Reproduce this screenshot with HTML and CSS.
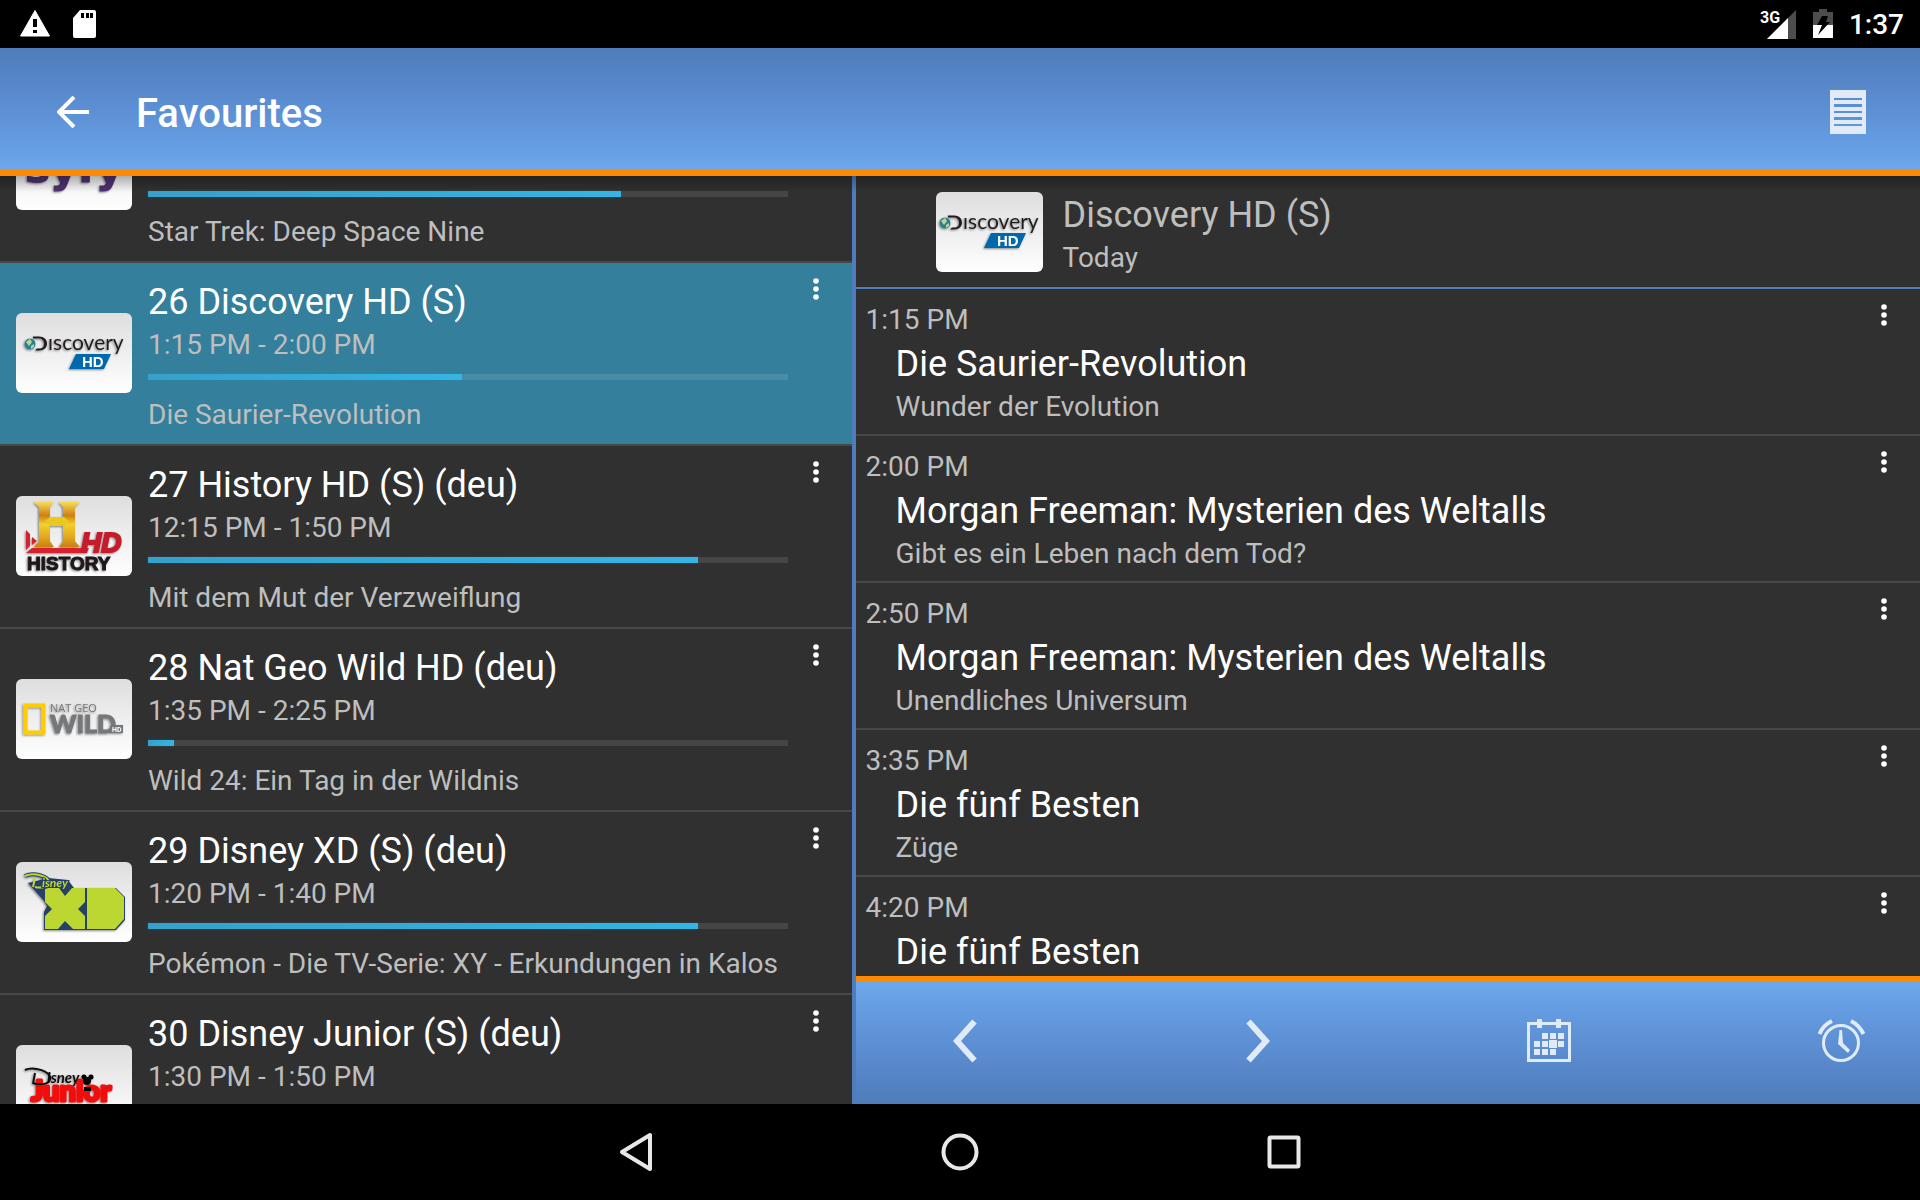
FILE: index.html
```html
<!DOCTYPE html>
<html lang="en">
<head>
<meta charset="utf-8">
<title>Favourites</title>
<link rel="stylesheet" href="styles.css">
</head>
<body>
<svg class="defs" aria-hidden="true">
  <defs>
    <linearGradient id="gold" x1="0" y1="0" x2="0" y2="1">
      <stop offset="0" stop-color="#f6dd55"/><stop offset=".3" stop-color="#cf7f14"/><stop offset=".5" stop-color="#f2cf30"/><stop offset=".8" stop-color="#e0a51c"/><stop offset="1" stop-color="#c98012"/>
    </linearGradient>
    <filter id="drop" x="-10%" y="-10%" width="120%" height="130%">
      <feDropShadow dx="-1" dy="1" stdDeviation="1" flood-opacity=".45"/>
    </filter>
    <symbol id="dots" viewBox="0 0 24 24">
      <circle cx="12" cy="4" r="2.8"/><circle cx="12" cy="12" r="2.8"/><circle cx="12" cy="20" r="2.8"/>
    </symbol>
    <symbol id="discovery" viewBox="0 0 116 80">
      <g filter="url(#drop)">
        <circle cx="14" cy="31" r="5.500" fill="#2f7f8c"/>
        <path d="M10 29l4-3 2 3-3 4zM15 33l3-2v3l-3 2z" fill="#b9d79a"/>
        <path d="M17 23.500h6c5 0 8 3 8 7s-3 7-8 7h-4l2-2h2c4 0 5-2 5-5s-2-5-5-5h-6z" fill="#231f20"/>
        <text x="32" y="37" font-size="21" fill="#231f20" class="logo-lato">ıscovery</text>
        <path d="M60 41h35l-7 15H53z" fill="#0067ac"/>
        <text x="66" y="54" font-size="15" font-weight="700" fill="#fff" class="logo-liberation">HD</text>
      </g>
    </symbol>
  </defs>
</svg>

<header class="status-bar">
  <div class="status-group">
    <svg class="status-icon" viewBox="0 0 32 32" role="img" aria-label="Warning"><path d="M16 2.500 30.500 28H1.500z" fill="#fff" stroke="#fff" stroke-linejoin="round"/><path d="M14 11h4v8h-4zM14 22h4v3h-4z" fill="#000"/></svg>
    <svg class="status-icon" viewBox="0 0 32 32" role="img" aria-label="SD card"><path d="M13 2h14a2 2 0 0 1 2 2v24a2 2 0 0 1-2 2H8a2 2 0 0 1-2-2V10z" fill="#fff"/><path d="M14 5h3v5h-3zM19 5h3v5h-3zM23 5h3v5h-3z" fill="#000"/></svg>
  </div>
  <div class="status-group status-end">
    <svg class="signal" viewBox="0 0 40 32" role="img" aria-label="3G signal"><path d="M39 2v29H10z" fill="#4d4d4d"/><path d="M31 10v21H10z" fill="#fff"/><text x="3" y="15" font-size="16" font-weight="700" fill="#fff" class="logo-roboto">3G</text></svg>
    <svg class="battery" viewBox="0 0 20 32" role="img" aria-label="Battery charging"><path d="M6 1h8v3h6v13H0V4h6z" fill="#4d4d4d"/><path d="M0 17h20v13H0z" fill="#fff"/><path d="M9 8h6l-2 6h4L5 27l4-10H4z" fill="#000"/></svg>
    <time class="clock">1:37</time>
  </div>
</header>

<div class="app-bar">
  <button class="icon-button" aria-label="Back"><svg viewBox="0 0 32 32" class="back-icon"><path d="M17 1 2 16l15 15M2 16h30" fill="none" stroke="#fff" stroke-width="4"/></svg></button>
  <h1 class="app-title">Favourites</h1>
  <button class="icon-button" aria-label="List"><svg viewBox="0 0 36 44" class="list-icon"><path fill="#e1ebf8" fill-rule="evenodd" d="M0 0h36v44H0zM4 8v2h28V8zM4 14v3h28v-3zM4 21v2h28v-2zM4 27v3h28v-3zM4 34v2h28v-2z"/></svg></button>
</div>

<main class="panes">
  <section class="channels" aria-label="Channels">
    <ul class="channel-list">
      <li class="channel">
        <svg class="logo" viewBox="0 0 116 80" role="img" aria-label="Syfy"><g filter="url(#drop)"><text x="9" y="52" font-size="42" font-weight="700" fill="#50306f" stroke="#50306f" stroke-width="1" class="logo-dejavu">syfy</text></g></svg>
        <div class="channel-info info-end">
          <div class="bar"><span class="fill" style="width:74%"></span></div>
          <p class="sub">Star Trek: Deep Space Nine</p>
        </div>
        <button class="more" aria-label="More"><svg viewBox="0 0 24 24"><use href="#dots"/></svg></button>
      </li>
      <li class="channel selected">
        <svg class="logo" viewBox="0 0 116 80" role="img" aria-label="Discovery HD"><use href="#discovery"/></svg>
        <div class="channel-info">
          <h2 class="title">26 Discovery HD (S)</h2><p class="sub">1:15 PM - 2:00 PM</p>
          <div class="bar"><span class="fill" style="width:49.1%"></span></div>
          <p class="sub">Die Saurier-Revolution</p>
        </div>
        <button class="more" aria-label="More"><svg viewBox="0 0 24 24"><use href="#dots"/></svg></button>
      </li>
      <li class="channel">
        <svg class="logo" viewBox="0 0 116 80" role="img" aria-label="History HD"><g filter="url(#drop)">
          <path d="M10 34v20l4-4V38zM16 41v8l5-4zM10 57l6-5h57l-2 5z" fill="#d5202f"/>
          <path d="M18 6h20l-4 5v10h13V11l-4-5h21l-5 5v34l5 6H43l4-6V30H34v15l4 6H18l5-6V11z" fill="url(#gold)"/>
          <path d="M34 21h14l5 4-5 5H34l-5-5z" fill="#e8c91e"/>
          <text x="65" y="56" font-size="28" font-weight="700" font-style="italic" fill="#c41f2c" stroke="#c41f2c" stroke-width="2" class="logo-liberation">HD</text>
          <text x="11" y="74" font-size="19" font-weight="900" fill="#1c1a1b" stroke="#1c1a1b" stroke-width="1" class="logo-liberation">HISTORY</text></g></svg>
        <div class="channel-info">
          <h2 class="title">27 History HD (S) (deu)</h2><p class="sub">12:15 PM - 1:50 PM</p>
          <div class="bar"><span class="fill" style="width:86%"></span></div>
          <p class="sub">Mit dem Mut der Verzweiflung</p>
        </div>
        <button class="more" aria-label="More"><svg viewBox="0 0 24 24"><use href="#dots"/></svg></button>
      </li>
      <li class="channel">
        <svg class="logo" viewBox="0 0 116 80" role="img" aria-label="Nat Geo Wild HD"><g filter="url(#drop)">
          <path d="M9.500 26.500h18v27h-18z" fill="none" stroke="#fc0" stroke-width="4"/>
          <text x="34" y="33" font-size="11" fill="#777" class="logo-open">NAT GEO</text>
          <text x="34" y="54" font-size="25" font-weight="900" fill="#75787a" stroke="#75787a" stroke-width="1" class="logo-lato">WILD</text>
          <path d="M95 46h12v8H92z" fill="#75787a"/>
          <text x="96" y="53" font-size="7" font-weight="700" fill="#fff" class="logo-roboto">HD</text></g></svg>
        <div class="channel-info">
          <h2 class="title">28 Nat Geo Wild HD (deu)</h2><p class="sub">1:35 PM - 2:25 PM</p>
          <div class="bar"><span class="fill" style="width:4.1%"></span></div>
          <p class="sub">Wild 24: Ein Tag in der Wildnis</p>
        </div>
        <button class="more" aria-label="More"><svg viewBox="0 0 24 24"><use href="#dots"/></svg></button>
      </li>
      <li class="channel">
        <svg class="logo" viewBox="0 0 116 80" role="img" aria-label="Disney XD"><g filter="url(#drop)">
          <path d="M12 21l20-5 20 2 6 8h42l9 9v23l-9 10H28V50l3-6-3-5z" fill="#263f66"/>
          <path d="M29 26h14l6 8 7-8h13v14l-7 7 7 7v13H57l-8-8-7 8H29V54l7-7-7-7zM71 26h28l9 9v22l-9 10H71z" fill="#bdd733"/>
          <path d="M9 14c8-4 26 0 24 8-2 4-10 4-14 3" fill="none" stroke="#263f66" stroke-width="4"/>
          <path d="M9 14c8-4 26 0 24 8-2 4-10 4-14 3M19 16l-2 9" fill="none" stroke="#bdd733" stroke-width="2"/>
          <text x="26" y="25" font-size="12" font-weight="700" font-style="italic" fill="#bdd733" stroke="#263f66" stroke-width="2" paint-order="stroke" class="logo-lato">isney</text></g></svg>
        <div class="channel-info">
          <h2 class="title">29 Disney XD (S) (deu)</h2><p class="sub">1:20 PM - 1:40 PM</p>
          <div class="bar"><span class="fill" style="width:86%"></span></div>
          <p class="sub">Pokémon - Die TV-Serie: XY - Erkundungen in Kalos</p>
        </div>
        <button class="more" aria-label="More"><svg viewBox="0 0 24 24"><use href="#dots"/></svg></button>
      </li>
      <li class="channel">
        <svg class="logo" viewBox="0 0 116 80" role="img" aria-label="Disney Junior"><g filter="url(#drop)">
          <text x="15" y="56" font-size="29" font-weight="900" fill="#f20d0d" stroke="#f20d0d" stroke-width="3" stroke-linejoin="round" class="logo-lato">Junior</text>
          <path d="M9 25c8-4 28 1 25 10-2 5-12 5-17 3M19 28l-2 11" fill="none" stroke="#111" stroke-width="2"/>
          <text x="31" y="38" font-size="15" font-weight="700" font-style="italic" fill="#111" class="logo-lato">isney</text>
          <circle cx="71" cy="36" r="4"/><circle cx="68" cy="32" r="2.500"/><circle cx="75" cy="32" r="2.500"/><path d="M68 42h7v4h-7z"/></g></svg>
        <div class="channel-info">
          <h2 class="title">30 Disney Junior (S) (deu)</h2><p class="sub">1:30 PM - 1:50 PM</p>
        </div>
        <button class="more" aria-label="More"><svg viewBox="0 0 24 24"><use href="#dots"/></svg></button>
      </li>
    </ul>
  </section>

  <section class="guide" aria-label="Programme guide">
    <header class="guide-head">
      <svg class="logo logo-narrow" viewBox="5 0 107 80" role="img" aria-label="Discovery HD"><use href="#discovery" width="116" height="80"/></svg>
      <div class="guide-name"><h2 class="title muted">Discovery HD (S)</h2><p class="sub">Today</p></div>
    </header>
    <ul class="events">
      <li class="event"><div class="event-info"><time class="sub">1:15 PM</time><h3 class="title">Die Saurier-Revolution</h3><p class="sub">Wunder der Evolution</p></div><button class="more" aria-label="More"><svg viewBox="0 0 24 24"><use href="#dots"/></svg></button></li>
      <li class="event"><div class="event-info"><time class="sub">2:00 PM</time><h3 class="title">Morgan Freeman: Mysterien des Weltalls</h3><p class="sub">Gibt es ein Leben nach dem Tod?</p></div><button class="more" aria-label="More"><svg viewBox="0 0 24 24"><use href="#dots"/></svg></button></li>
      <li class="event"><div class="event-info"><time class="sub">2:50 PM</time><h3 class="title">Morgan Freeman: Mysterien des Weltalls</h3><p class="sub">Unendliches Universum</p></div><button class="more" aria-label="More"><svg viewBox="0 0 24 24"><use href="#dots"/></svg></button></li>
      <li class="event"><div class="event-info"><time class="sub">3:35 PM</time><h3 class="title">Die fünf Besten</h3><p class="sub">Züge</p></div><button class="more" aria-label="More"><svg viewBox="0 0 24 24"><use href="#dots"/></svg></button></li>
      <li class="event"><div class="event-info"><time class="sub">4:20 PM</time><h3 class="title">Die fünf Besten</h3></div><button class="more" aria-label="More"><svg viewBox="0 0 24 24"><use href="#dots"/></svg></button></li>
    </ul>
    <div class="toolbar">
      <button class="tool" aria-label="Previous day"><svg viewBox="0 0 64 64"><path d="M40.500 12.500 23 32l17.500 19.500" fill="none" stroke="#e1ebf8" stroke-width="6"/></svg></button>
      <button class="tool" aria-label="Next day"><svg viewBox="0 0 64 64"><path d="M23.500 12.500 41 32 23.500 51.500" fill="none" stroke="#e1ebf8" stroke-width="6"/></svg></button>
      <button class="tool" aria-label="Calendar"><svg viewBox="0 0 64 64"><path d="M11.500 14.500h41v37h-41z" fill="none" stroke="#e1ebf8" stroke-width="3"/><path d="M20 10h5v9h-5zM39 10h5v9h-5zM25 24h6v6h-6zM33 24h6v6h-6zM41 24h6v6h-6zM17 32h6v6h-6zM25 32h6v6h-6zM32 31h8v8h-8zM41 32h6v6h-6zM17 40h6v6h-6zM25 40h6v6h-6zM33 40h6v6h-6z" fill="#e1ebf8"/></svg></button>
      <button class="tool" aria-label="Reminders"><svg viewBox="0 0 64 64"><g fill="none" stroke="#e1ebf8" stroke-width="3"><circle cx="32" cy="34" r="17.500"/><path d="M10.500 25c2-5 6-10 12.500-13M42 12c6 3 10 8 12.500 13" stroke-width="4"/></g><path d="M30.500 21h2.500l1 13 7 7-2 3-10-9z" fill="#e1ebf8"/></svg></button>
    </div>
  </section>
</main>

<nav class="nav-bar" aria-label="System">
  <button class="nav-button" aria-label="Back"><svg viewBox="0 0 48 48"><path d="M38 7v34L10 24z" fill="none" stroke="#e8e8e8" stroke-width="4" stroke-linejoin="round"/></svg></button>
  <button class="nav-button" aria-label="Home"><svg viewBox="0 0 48 48"><circle cx="24" cy="24" r="16.500" fill="none" stroke="#e8e8e8" stroke-width="4"/></svg></button>
  <button class="nav-button" aria-label="Recent apps"><svg viewBox="0 0 48 48"><rect x="9.500" y="9.500" width="29" height="29" rx="1" fill="none" stroke="#e8e8e8" stroke-width="4"/></svg></button>
</nav>
</body>
</html>
```
FILE: styles.css
```css
* { box-sizing: border-box; }

body {
  margin: 0;
  height: 100vh;
  display: flex;
  flex-direction: column;
  overflow: hidden;
  background: #000;
  color: #fff;
  font-family: Roboto, "Liberation Sans", sans-serif;
}

h1, h2, h3, p, ul { margin: 0; padding: 0; font-weight: 400; }
ul { list-style: none; }
svg { display: block; }
button { border: 0; padding: 0; background: none; color: inherit; font: inherit; cursor: pointer; }

.defs { position: absolute; width: 0; height: 0; }

/* System status bar */
.status-bar { flex: none; height: 48px; padding: 0 16px 0 19px; display: flex; align-items: center; justify-content: space-between; }
.status-group { display: flex; align-items: center; gap: 16px; }
.status-icon { width: 32px; height: 32px; }
.signal { width: 40px; height: 32px; }
.battery { width: 20px; height: 32px; }
.clock { padding-top: 2px; font-size: 28px; line-height: 32px; font-weight: 500; }

/* Application bar */
.app-bar {
  flex: none;
  height: 128px;
  padding: 6px 54px 0 57px;
  display: flex;
  align-items: center;
  border-bottom: 6px solid #ff8900;
  background: linear-gradient(#4f7cba, #5c8fd4 50%, #6da7ec);
}
.back-icon { width: 32px; height: 32px; }
.app-title { flex: 1; margin-left: 47px; padding-top: 4px; font-size: 40px; line-height: 48px; font-weight: 500; }
.list-icon { width: 36px; height: 44px; }

/* Two panes */
.panes {
  position: relative;
  flex: 1;
  min-height: 0;
  display: grid;
  grid-template-columns: minmax(0, 4fr) 4px minmax(0, 5fr);
  grid-template-rows: minmax(0, 1fr);
  background: #303030;
}
.panes::before {
  content: "";
  position: absolute;
  inset: 0 0 auto;
  height: 16px;
  background: linear-gradient(rgba(0, 0, 0, .28), transparent);
  z-index: 1;
  pointer-events: none;
}

.title { font-size: 36px; line-height: 48px; white-space: nowrap; }
.sub { display: block; font-size: 28px; line-height: 38px; color: #bebebe; white-space: nowrap; }
.muted { color: #bebebe; }

.logo { flex: none; width: 116px; height: 80px; border-radius: 6px; background: linear-gradient(#dedede, #fff); }
.logo-narrow { width: 107px; }

.more { flex: none; width: 24px; height: 24px; }
.more svg { width: 24px; height: 24px; fill: #fff; }

/* Channel list, scrolled part of a row down */
.channels { overflow: hidden; }
.channel-list { margin-top: -96px; }
.channel { height: 183px; padding: 0 24px 0 16px; display: flex; align-items: flex-start; border-bottom: 2px solid #484848; }
.channel.selected { background: #347f9b; background-clip: padding-box; }
.channel .logo { margin-top: 50px; }
.channel-info { flex: 1; min-width: 0; margin: 15px 16px 0; }
.info-end { align-self: flex-end; margin: 0 16px 10px; }
.channel .more { margin-top: 14px; }
.bar { height: 6px; margin: 10px 0 16px; background: rgba(255, 255, 255, .1); }
.fill { display: block; height: 6px; background: linear-gradient(90deg, #36a0cb, #33b5e5); box-shadow: 0 0 2px rgba(51, 181, 229, .3); }

/* Programme guide */
.guide { grid-column: 3; display: flex; flex-direction: column; overflow: hidden; }
.panes::after { content: ""; grid-column: 2; grid-row: 1; background: #4f7cba; }
.guide-head { flex: none; height: 113px; padding: 0 80px; display: flex; align-items: center; gap: 20px; border-bottom: 2px solid #4f7cba; }
.guide-name { padding-top: 4px; }
.events { flex: 1; min-height: 0; overflow: hidden; }
.event { height: 147px; padding: 12px 24px 7px 10px; display: flex; border-bottom: 2px solid #484848; }
.event-info { flex: 1; min-width: 0; }
.event-info .title { margin-top: 1px; }
.event-info .title, .event-info p { padding-left: 30px; }
.event .more { margin-top: 2px; }

.toolbar {
  flex: none;
  height: 128px;
  padding: 0 47px 4px 78px;
  display: flex;
  align-items: center;
  justify-content: space-between;
  border-top: 6px solid #ff8900;
  background: linear-gradient(#6da7ec, #5c8fd4 50%, #4f7cba);
}
.tool, .tool svg { width: 64px; height: 64px; }

/* System navigation */
.nav-bar { flex: none; height: 96px; display: flex; align-items: center; justify-content: center; gap: 276px; }
.nav-button, .nav-button svg { width: 48px; height: 48px; }

/* Lettering inside the channel logos */
.logo-lato { font-family: Lato, sans-serif; }
.logo-liberation { font-family: "Liberation Sans", sans-serif; }
.logo-roboto { font-family: Roboto, sans-serif; }
.logo-open { font-family: "Open Sans", sans-serif; }
.logo-dejavu { font-family: "DejaVu Sans", sans-serif; }
```
